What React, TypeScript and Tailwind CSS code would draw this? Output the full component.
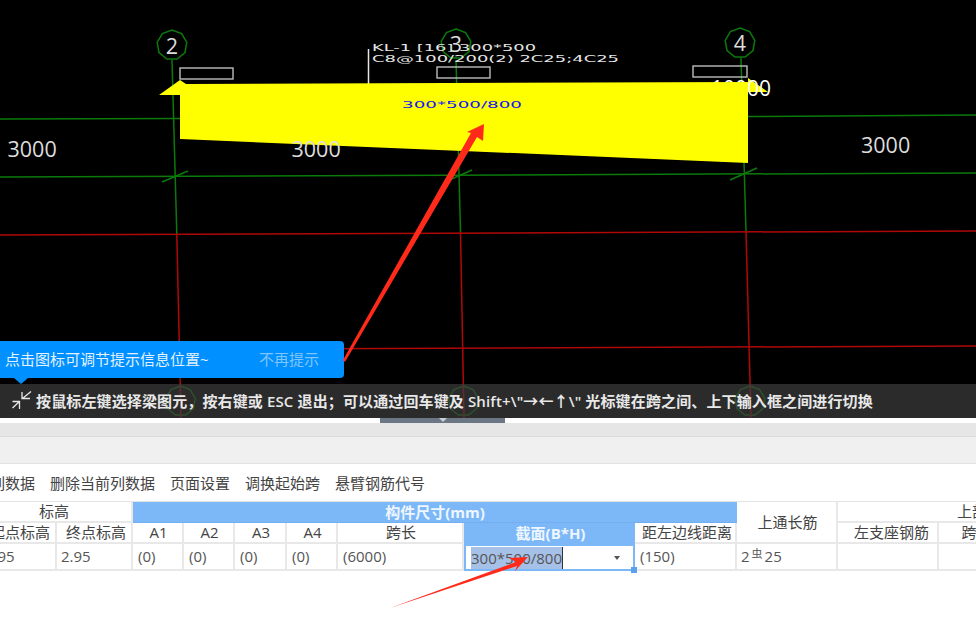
import React from "react";

const GREEN = "#0b7a0b";
const RED = "#b00808";

function ring(cx: number, cy: number, r: number, n = 9) {
  const pts: string[] = [];
  for (let i = 0; i < n; i++) {
    const a = -Math.PI / 2 + (i * 2 * Math.PI) / n;
    pts.push(`${(cx + r * Math.cos(a)).toFixed(1)},${(cy + r * Math.sin(a)).toFixed(1)}`);
  }
  return pts.join(" ");
}

function Drawing() {
  const dim = { fontFamily: "'Open Sans',sans-serif", fontSize: 21.5, fill: "#dddddd" };
  const cad = { fontFamily: "'DejaVu Sans',sans-serif", fontSize: 8.5, fill: "#e6e6e6" };
  return (
    <svg width="976" height="418" viewBox="0 0 976 418" className="block">
      {/* green grid */}
      <g stroke={GREEN} strokeWidth="1.5" fill="none">
        <line x1="0" y1="119" x2="180" y2="118.5" />
        <line x1="748" y1="116.5" x2="976" y2="115" />
        <line x1="0" y1="177" x2="976" y2="173" />
        <line x1="172" y1="60" x2="176.8" y2="234" />
        <line x1="456" y1="60" x2="460.5" y2="232" />
        <line x1="741" y1="58" x2="746" y2="231" />
        <line x1="162" y1="182" x2="188" y2="171" />
        <line x1="447" y1="181" x2="472" y2="170" />
        <line x1="730" y1="180" x2="757" y2="168" />
        <polygon points={ring(172, 45, 15)} />
        <polygon points={ring(456, 44, 15)} />
        <polygon points={ring(740, 43, 15)} />
        <polygon points={ring(180.5, 401, 15)} />
        <polygon points={ring(463.5, 401, 15)} />
        <polygon points={ring(750, 401, 15)} />
      </g>
      {/* red grid */}
      <g stroke={RED} strokeWidth="1.5" fill="none">
        <line x1="0" y1="235" x2="976" y2="231" />
        <line x1="0" y1="350" x2="976" y2="346" />
        <line x1="176.8" y1="234" x2="181" y2="418" />
        <line x1="460.5" y1="232" x2="464" y2="418" />
        <line x1="746" y1="231" x2="751" y2="418" />
      </g>
      {/* axis numbers */}
      <text x="172" y="53.5" textAnchor="middle" {...dim}>2</text>
      <text x="456" y="52" textAnchor="middle" {...dim}>3</text>
      <text x="740" y="51" textAnchor="middle" {...dim}>4</text>
      {/* support boxes */}
      <g stroke="#bdbdbd" strokeWidth="1.4" fill="none">
        <rect x="180" y="68" width="53" height="11" />
        <rect x="437" y="67" width="53" height="11" />
        <rect x="693" y="66" width="54" height="11" />
      </g>
      {/* beam annotation */}
      <line x1="368.5" y1="49" x2="368.5" y2="84" stroke="#e6e6e6" strokeWidth="1.5" />
      <text x="372" y="50.5" textLength="164" lengthAdjust="spacingAndGlyphs" {...cad}>KL-1 [16] 300*500</text>
      <text x="372" y="62" textLength="247" lengthAdjust="spacingAndGlyphs" {...cad}>C8@100/200(2) 2C25;4C25</text>
      {/* beam */}
      <polygon points="748,78 768,92 748,92" fill="#ffff00" />
      <text x="711" y="95.5" {...dim} fontSize={21} fill="#ffffff">10000</text>
      <polygon
        points="180,80 186,84 748,82 748,163 180,139 180,95 159,95"
        fill="#ffff00"
      />
      <text x="402" y="107.5" textLength="120" lengthAdjust="spacingAndGlyphs" fontFamily="'DejaVu Sans',sans-serif" fontSize="8.5" fill="#1414f5">300*500/800</text>
      {/* dimensions */}
      <text x="7.5" y="156.5" {...dim}>3000</text>
      <text x="291.5" y="156.5" {...dim}>3000</text>
      <text x="861" y="152.5" {...dim}>3000</text>
    </svg>
  );
}

function Hint() {
  return (
    <>
      <div className="absolute left-0 top-[341px] flex h-[37px] w-[344px] items-center rounded-r-[4px] bg-[#0090ff] pl-[5px] text-[15px]">
        <span className="w-[254px] text-[#e4f2ff]">点击图标可调节提示信息位置~</span>
        <span className="text-[#7fc4fb]">不再提示</span>
      </div>
      <div className="absolute left-[14px] top-[378px] h-0 w-0 border-x-[7px] border-t-[6px] border-x-transparent border-t-[#0090ff]" />
      <div className="absolute bottom-0 left-0 flex h-[34px] w-full items-center bg-[#3d3d3d]/70 pl-[12px]">
        <svg width="20" height="20" viewBox="0 0 20 20" fill="none" stroke="#e8e8e8" strokeWidth="1.3">
          <path d="M19 0.5 L10.5 7.5 M10 1 V7.5 H18" />
          <path d="M0.5 17 L7.5 10.5 M0.5 10.5 H7.5 V18" />
        </svg>
        <span className="ml-[4px] whitespace-nowrap text-[15px] font-semibold tracking-[0.13px] text-[#e8e8e8]">
          按鼠标左键选择梁图元，按右键或 ESC 退出；可以通过回车键及 Shift+\"→←↑\" 光标键在跨之间、上下输入框之间进行切换
        </span>
      </div>
    </>
  );
}

const cell = "flex items-center justify-center border-r-2 border-b-2 border-[#e8e8e8] text-[15px] text-[#444] whitespace-nowrap overflow-hidden";
const val = "flex items-center border-r-2 border-b-2 border-[#e8e8e8] text-[15px] text-[#555] whitespace-nowrap overflow-hidden";

function SectionTable() {
  return (
    <div className="ml-[-19px] grid w-max grid-cols-[76px_76px_51px_51px_52px_51px_126px_171px_102px_101px_101px_101px_98px] grid-rows-[21px_21px_27px] border-t border-[#e4e4e4]">
      <div className={`col-span-2 pr-[4px] ${cell}`}>标高</div>
      <div className="col-span-7 flex items-center justify-center border-b border-[#72aef0] bg-[#7cb8f8] text-[15px] font-bold text-[#eef6ff]">构件尺寸(mm)</div>
      <div className={`row-span-2 pl-[2px] ${cell}`}>上通长筋</div>
      <div className={`col-span-3 ${cell}`}>上部钢筋</div>

      <div className={`pl-[4px] ${cell}`}>起点标高</div>
      <div className={`pl-[4px] ${cell}`}>终点标高</div>
      <div className={`pl-[2px] ${cell}`}>A1</div>
      <div className={`pl-[2px] ${cell}`}>A2</div>
      <div className={`pl-[2px] ${cell}`}>A3</div>
      <div className={`pl-[2px] ${cell}`}>A4</div>
      <div className={`pl-[2px] ${cell}`}>跨长</div>
      <div className="flex items-center justify-center bg-[#7cb8f8] pl-[2px] text-[15px] font-bold text-[#eef6ff]">截面(B*H)</div>
      <div className={`pl-[4px] ${cell}`}>距左边线距离</div>
      <div className={`pl-[8px] ${cell}`}>左支座钢筋</div>
      <div className={`pl-[6px] ${cell}`}>跨中钢筋</div>
      <div className={cell}>右支座钢筋</div>

      <div className={`pl-[4px] ${val}`}>2.95</div>
      <div className={`pl-[4px] ${val}`}>2.95</div>
      <div className={`pl-[5px] ${val}`}>(0)</div>
      <div className={`pl-[5px] ${val}`}>(0)</div>
      <div className={`pl-[5px] ${val}`}>(0)</div>
      <div className={`pl-[5px] ${val}`}>(0)</div>
      <div className={`pl-[5px] ${val}`}>(6000)</div>
      <div className="relative flex items-center border-2 border-[#7cb8f8] pl-[5px] pr-[13px] text-[15px] text-[#555]">
        <span className="border-r border-[#333] bg-[#a6c1e8] leading-[22px]">300*500/800</span>
        <span className="ml-auto h-0 w-0 border-x-[3px] border-t-[4px] border-x-transparent border-t-[#555]" />
        <span className="absolute bottom-[-4px] right-[-4px] h-[6px] w-[6px] bg-[#5aa2ee]" />
      </div>
      <div className={`pl-[5px] ${val}`}>(150)</div>
      <div className={`pl-[4px] ${val}`}>
        2<span className="relative top-[-2px] mx-[2px] text-[11px]">虫</span>25
      </div>
      <div className={val} />
      <div className={val} />
      <div className={val} />
    </div>
  );
}

export default function App() {
  return (
    <div className="relative h-[626px] w-[976px] overflow-hidden bg-white font-['Open_Sans','Noto_Sans_CJK_SC',sans-serif]">
      <div className="relative h-[418px] bg-black">
        <Drawing />
        <Hint />
      </div>

      <div className="relative h-[5px] bg-white">
        <div className="absolute left-[380px] top-0 flex h-[5px] w-[125px] justify-center bg-[#6b7785]">
          <span className="h-0 w-0 border-x-[4px] border-t-[4px] border-x-transparent border-t-[#c8ced4]" />
        </div>
      </div>
      <div className="h-[14px] border-b border-[#dcdcdc] bg-[#e6e6e6]" />
      <div className="h-[27px] border-b border-[#e2e2e2] bg-[#f0f0f0]" />

      <div className="ml-[-10px] flex h-[37px] items-center gap-[15px] pt-[2px] text-[15px] text-[#444]">
        <span>列数据</span>
        <span>删除当前列数据</span>
        <span>页面设置</span>
        <span>调换起始跨</span>
        <span>悬臂钢筋代号</span>
      </div>

      <SectionTable />

      {/* red annotation arrows */}
      <svg width="976" height="626" viewBox="0 0 976 626" className="pointer-events-none absolute left-0 top-0">
        <polygon points="343,360 471,133 467,132 484,124 483,141 477,137 345,362" fill="#ff2a1a" />
        <polygon points="390,608 516,562 509,558 528,557 515,571 517,566" fill="#ff2a1a" />
      </svg>
    </div>
  );
}
